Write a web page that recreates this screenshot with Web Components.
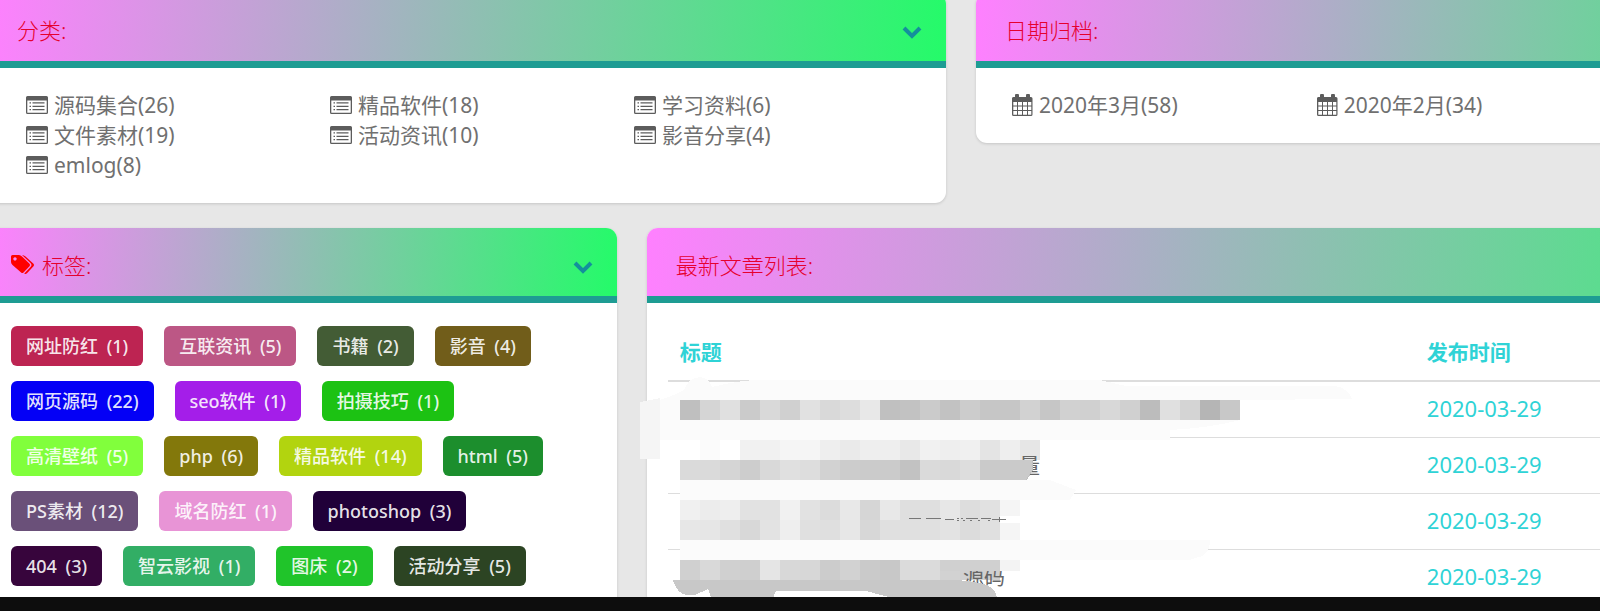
<!DOCTYPE html>
<html lang="zh-CN">
<head>
<meta charset="utf-8">
<title>最新文章列表</title>
<style>
    html, body {
        height: 100%;
        margin: 0;
    }

    body {
        background: #e7e7e7;
        color: #707070;
        font: 400 21px/30px "Noto Sans", "Noto Sans CJK SC", sans-serif;
    }
</style>
</head>
<body>
<blog-page>
    <panel-card heading="分类:" toggle style="--span: 6">
        <link-grid icon="list" items="源码集合(26)|精品软件(18)|学习资料(6)|文件素材(19)|活动资讯(10)|影音分享(4)|emlog(8)"></link-grid>
    </panel-card>
    <panel-card heading="日期归档:" style="--span: 6">
        <link-grid icon="calendar" items="2020年3月(58)|2020年2月(34)"></link-grid>
    </panel-card>
    <panel-card heading="标签:" toggle icon="tags" style="--span: 4">
        <tag-cloud></tag-cloud>
    </panel-card>
    <panel-card heading="最新文章列表:" style="--span: 8">
        <post-table></post-table>
    </panel-card>
</blog-page>

<script>
const ICONS = {
    list: `<svg width="22" height="18" viewBox="0 0 22 18"><path fill="currentColor" fill-rule="evenodd" d="M1.500 0h19a1.500 1.500 0 0 1 1.500 1.500v15a1.500 1.500 0 0 1-1.500 1.500h-19a1.500 1.500 0 0 1-1.500-1.500v-15a1.500 1.500 0 0 1 1.500-1.500zM1.300 4.500v12.200h19.400V4.500zM3.500 6.300h1.500v1.300H3.500zM6.500 6.300h12v1.300h-12zM3.500 9.700h1.500V11H3.500zM6.500 9.700h12V11h-12zM3.500 13h1.500v1.300H3.500zM6.500 13h12v1.300h-12z"/></svg>`,
    calendar: `<svg width="21" height="22" viewBox="0 0 21 22"><path fill="currentColor" fill-rule="evenodd" d="M2 3h1V1.500a1.500 1.500 0 0 1 4 0V3h7V1.500a1.500 1.500 0 0 1 4 0V3h1a1.500 1.500 0 0 1 1.500 1.500v16a1.500 1.500 0 0 1-1.500 1.500H1.500A1.500 1.500 0 0 1 0 20.500v-16A1.500 1.500 0 0 1 2 3zM1.300 8v3.500H5V8zM6 8v3.500h4V8zM11 8v3.500h4V8zM16 8v3.500h3.300V8zM1.300 12.500V16H5v-3.500zM6 12.500V16h4v-3.500zM11 12.500V16h4v-3.500zM16 12.500V16h3.300v-3.500zM1.300 17v3.700H5V17zM6 17v3.700h4V17zM11 17v3.700h4V17zM16 17v3.700h3.300V17z"/></svg>`,
    tags: `<svg width="24" height="20" viewBox="0 0 24 20"><path fill="red" fill-rule="evenodd" d="M1.500 0H8q1.500 0 3 1.500l7.500 7.300q1.200 1.200 0 2.400l-6 6.300q-1.200 1.200-2.400 0L1.500 10Q0 8.500 0 7V1.500Q0 0 1.500 0zM4 2.200a1.700 1.700 0 1 0 .01 0zM11 0q2 0 3.500 1.500l8 7.300q1.200 1.200 0 2.400l-6.500 7q-1.500 1.500-2.700.3l6.200-6.500q2-2 0-4z"/></svg>`,
    chevron: `<svg width="20" height="14" viewBox="0 0 20 14"><path fill="none" stroke="#148f9c" stroke-width="4" d="M2 3l8 8 8-8"/></svg>`
};

class BlogPage extends HTMLElement {
    constructor() {
        super();
        this.attachShadow({ mode: 'open' });
    }

    connectedCallback() {
        this.shadowRoot.innerHTML = `
            <style>
                :host {
                    display: flex;
                    flex-direction: column;
                    height: 100vh;
                    overflow: hidden;
                }

                /* the view is scrolled a little way into a wider page */
                main {
                    flex: 1;
                    min-height: 0;
                    overflow: hidden;
                    display: grid;
                    grid-template-columns: repeat(12, minmax(0, 1fr));
                    align-items: start;
                    align-content: start;
                    gap: 25px 30px;
                    margin: -7px -334px 0 -12px;
                }

                footer {
                    height: 14px;
                    background: #0d0d0d;
                }
            </style>
            <main><slot></slot></main>
            <footer></footer>
        `;
    }
}

class PanelCard extends HTMLElement {
    constructor() {
        super();
        this.attachShadow({ mode: 'open' });
    }

    connectedCallback() {
        const icon = this.getAttribute('icon');
        this.shadowRoot.innerHTML = `
            <style>
                :host {
                    display: block;
                    grid-column: span var(--span);
                    background: #fff;
                    border-radius: 11px;
                    box-shadow: 0 1px 3px rgba(0, 0, 0, .15);
                }

                header {
                    display: flex;
                    align-items: center;
                    gap: 7px;
                    padding: 22px 24px 16px 29px;
                    border-bottom: 7px solid #1e9c93;
                    border-radius: 11px 11px 0 0;
                    background: linear-gradient(95deg, #ff80ff, #24fb69);
                }

                header.with-icon {
                    padding-left: 23px;
                }

                h2 {
                    flex: 1;
                    margin: 0;
                    color: #e6002e;
                    font-size: 22px;
                    font-weight: 300;
                    line-height: 30px;
                }

                button {
                    display: flex;
                    padding: 4px 0 0;
                    border: 0;
                    background: none;
                }
            </style>
            <header class="${icon ? 'with-icon' : ''}">
                ${icon ? ICONS[icon] : ''}
                <h2>${this.getAttribute('heading')}</h2>
                ${this.hasAttribute('toggle') ? `<button type="button" aria-label="${this.getAttribute('heading')}">${ICONS.chevron}</button>` : ''}
            </header>
            <slot></slot>
        `;
    }
}

class LinkGrid extends HTMLElement {
    constructor() {
        super();
        this.attachShadow({ mode: 'open' });
    }

    connectedCallback() {
        const icon = ICONS[this.getAttribute('icon')];
        const items = this.getAttribute('items').split('|');
        this.shadowRoot.innerHTML = `
            <style>
                :host {
                    display: block;
                    padding: 22px 8px 23px 38px;
                }

                :host([icon="calendar"]) {
                    padding-left: 36px;
                }

                ul {
                    display: grid;
                    grid-template-columns: repeat(3, 1fr);
                    margin: 0;
                    padding: 0;
                    list-style: none;
                }

                a {
                    display: flex;
                    align-items: center;
                    gap: 6px;
                    color: inherit;
                    text-decoration: none;
                }

                svg {
                    color: #5c5c5c;
                }
            </style>
            <ul>${items.map(item => `<li><a href="#">${icon}<span>${item}</span></a></li>`).join('')}</ul>
        `;
    }
}

const TAG_ROWS = [
    [['网址防红', 1, '#bd2452'], ['互联资讯', 5, '#bc5785'], ['书籍', 2, '#435c35'], ['影音', 4, '#715d1a']],
    [['网页源码', 22, '#0400f6'], ['seo软件', 1, '#a41ee9'], ['拍摄技巧', 1, '#1cc213']],
    [['高清壁纸', 5, '#81ff3c'], ['php', 6, '#83780b'], ['精品软件', 14, '#b2d40f'], ['html', 5, '#1c8e2d']],
    [['PS素材', 12, '#6a5079'], ['域名防红', 1, '#e894d6'], ['photoshop', 3, '#200039']],
    [['404', 3, '#37053c'], ['智云影视', 1, '#32ae65'], ['图床', 2, '#20c42a'], ['活动分享', 5, '#2c4423']]
];

class TagCloud extends HTMLElement {
    constructor() {
        super();
        this.attachShadow({ mode: 'open' });
    }

    connectedCallback() {
        this.shadowRoot.innerHTML = `
            <style>
                :host {
                    display: flex;
                    flex-direction: column;
                    gap: 15px;
                    padding: 23px;
                    font-size: 18px;
                    font-weight: 500;
                    line-height: 40px;
                }

                div {
                    display: flex;
                    gap: 21px;
                }

                a {
                    padding: 0 15px;
                    border-radius: 6px;
                    color: rgba(255, 255, 255, .9);
                    text-decoration: none;
                    white-space: nowrap;
                }

                span {
                    margin-left: 4px;
                }
            </style>
            ${TAG_ROWS.map(row => `<div>${row.map(([name, count, color]) => `<a href="#" style="background: ${color}">${name} <span>(${count})</span></a>`).join('')}</div>`).join('')}
        `;
    }
}

// grey level of each 20px block, as hex pairs, one row per strip: [x, y, levels]
const MOSAIC = [
    [40, 30, 'bfd5e0cbd9d0e1d9dde8c0c2cbc2ccc6c6d2c6d1d0d8d0bce0d4b5c8'],
    [60, 70, 'fbfff1f1f5f5eeeaeeeee8f1eef0e4eee6'],
    [40, 90, 'dadad5cdd9e0ddd2cccbcbc2dad9ddcaca'],
    [40, 130, 'f0eceee2e2f1e2dce8d6e8dfdfe7dde1f5'],
    [40, 150, 'e7e6e0d8e3eee0dfe7d7e0e0e0e3dce0f5'],
    [40, 190, 'd0d9d0cfe5d8d7ccd2cac8dbdbd2d0d0f3']
];

class PostTable extends HTMLElement {
    constructor() {
        super();
        this.attachShadow({ mode: 'open' });
    }

    connectedCallback() {
        const blocks = MOSAIC.map(([x, y, levels]) => levels.match(/../g).map((level, i) =>
            `<rect x="${x + i * 20}" y="${y}" width="20" height="20" fill="#${level.repeat(3)}"/>`).join('')).join('');
        const dates = ['2020-03-29', '2020-03-29', '2020-03-29', '2020-03-29'];
        this.shadowRoot.innerHTML = `
            <style>
                :host {
                    display: block;
                    position: relative;
                    padding: 21px 21px 0;
                    color: #2fd3d6;
                }

                table {
                    width: 100%;
                    table-layout: fixed;
                    border-collapse: separate;
                    border-spacing: 0;
                }

                th, td {
                    box-sizing: border-box;
                    padding: 11px 12px 13px;
                    border-bottom: 1px solid #ddd;
                    text-align: left;
                    line-height: 31px;
                }

                th {
                    padding: 13px 12px 12px;
                    border-bottom-width: 2px;
                    font-weight: 700;
                }

                th:first-child {
                    width: 60%;
                }

                td {
                    font-size: 22px;
                }

                /* lies over the titles and runs past the card's left edge */
                svg {
                    position: absolute;
                    top: 67px;
                    left: -7px;
                }

                text {
                    fill: #666;
                    font-size: 21px;
                }
            </style>
            <table>
                <thead><tr><th>标题</th><th>发布时间</th></tr></thead>
                <tbody>${dates.map(date => `<tr><td></td><td>${date}</td></tr>`).join('')}</tbody>
            </table>
            <svg width="720" height="230" viewBox="0 0 720 230" shape-rendering="crispEdges" aria-hidden="true">
                <path fill="#fbfbfb" d="M20 30Q35 25 44 20Q48 8 60 7Q69 8 72 17Q100 10 120 10H460L486 16H695Q708 18 712 29L600 30V50Q570 58 530 60V70H20zM40 110H410L436 120L430 130H40zM40 170H570Q570 186 555 188L550 190H40z"/>
                <path fill="#f5f5f5" d="M0 32L20 28V89H0z"/>
                ${blocks}
                <path fill="#fff" d="M360 146h20v7h-20zM360 201h20v9h-20z"/>
                <path fill="none" stroke="#777" d="M269 148.500h12M286 148.500h15M305 149.500h9M317 148.500h2m2 0h2m3 0h12m3 0h10M317 150.500h2m4 0h2m5 0h2m6 0h2m8 0h2M352 149.500h14M359 147v5"/>
                <text x="379" y="103">量</text>
                <path fill="#bfbfbf" d="M380 90h13v10l-6 10h-7z"/>
                <path fill="#cacaca" d="M370 90h22v10l-6 10h-16z"/>
                <text x="323" y="214">源码</text>
                <path fill="#d0d0d0" d="M300 190h60v11h-60z"/>
                <path fill="#f3f3f3" d="M360 190h20v11h-20z"/>
                <path fill="#c8c8c8" d="M33 210H315Q335 211 347 215Q357 220 357 230H260L226 221H136L132 230H72L68 219L55 225Q38 228 33 210z"/>
            </svg>
        `;
    }
}

customElements.define('blog-page', BlogPage);
customElements.define('panel-card', PanelCard);
customElements.define('link-grid', LinkGrid);
customElements.define('tag-cloud', TagCloud);
customElements.define('post-table', PostTable);
</script>
</body>
</html>
